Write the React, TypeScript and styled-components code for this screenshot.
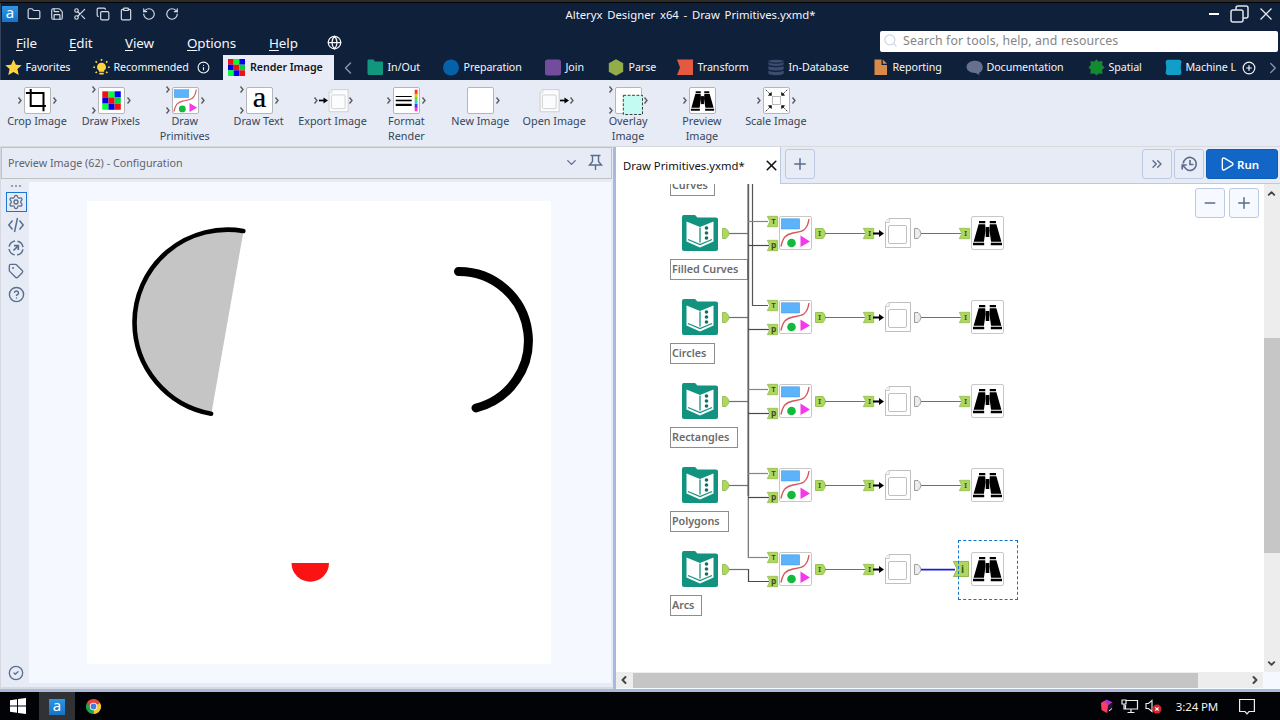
import React from "react";
import styled, { createGlobalStyle } from "styled-components";
import {
  Folder, Save, Scissors, Copy, Clipboard, RotateCcw, RotateCw, Globe, Search, Info,
  ChevronLeft, ChevronRight, ChevronDown, ChevronUp, ChevronsRight, CirclePlus, Minus, Plus, X,
  Settings, Tag, CircleHelp, CircleCheck, Play,
} from "lucide-react";

const GlobalStyle = createGlobalStyle`
  * { box-sizing: border-box; }
  body { margin: 0; overflow: hidden; font-family: "Noto Sans", "Open Sans", sans-serif; }
  svg { display: block; flex: none; overflow: visible; }
`;

const Window = styled.div`
  width: 1280px;
  height: 720px;
  display: flex;
  flex-direction: column;
  background: #e7ebf6;
`;

const TopEdge = styled.div`
  height: 3px;
  flex: none;
  background: #2c2c2c;
  border-bottom: 1px solid #050505;
`;

const Header = styled.header`
  flex: none;
  height: 77px;
  background: #0f203a;
  color: #f4f6fa;
  border-left: 1px solid #33435c;
  overflow: hidden;
`;

const TitleBar = styled.div`
  height: 22px;
  display: grid;
  grid-template-columns: 520px 1fr 420px;
  align-items: center;
`;

const QuickActions = styled.div`
  display: flex;
  align-items: center;
  gap: 9px;
  padding-left: 1px;
  color: #d8dde6;
`;

const AppLogo = styled.div`
  width: 16px;
  height: 16px;
  flex: none;
  background: linear-gradient(#2d97e8, #1672c4);
  color: #fff;
  font-size: 15px;
  line-height: 13px;
  text-align: center;
`;

const TitleText = styled.div`
  text-align: center;
  font-size: 11.3px;
  white-space: nowrap;
  word-spacing: 1.8px;
`;

const WindowButtons = styled.div`
  display: flex;
  align-items: center;
  justify-content: flex-end;
  padding-right: 8px;
  gap: 11px;
`;

const MenuRow = styled.div`
  height: 30px;
  display: flex;
  align-items: center;
  padding: 4px 2px 0 15px;
`;

const MenuItem = styled.div<{ $w: number }>`
  width: ${(p) => p.$w}px;
  height: 24px;
  font-size: 13.4px;
  letter-spacing: -0.1px;
  line-height: 24px;
  padding-top: 1px;
  &::first-letter { text-decoration: underline; text-underline-offset: 2px; }
`;

const SearchBox = styled.div`
  width: 398px;
  height: 21px;
  margin: 0 0 1px auto;
  display: flex;
  align-items: center;
  gap: 5px;
  padding: 0 0 2px 3px;
  border-radius: 2px;
  background: #fff;
  color: #858585;
  font-size: 12.3px;
  letter-spacing: 0.14px;
`;

const TabRow = styled.div`
  height: 25px;
  display: flex;
  align-items: center;
  padding-left: 4px;
  font-size: 10.7px;
  letter-spacing: -0.08px;
`;

const Category = styled.div<{ $w: number; $active?: boolean }>`
  width: ${(p) => p.$w}px;
  flex: none;
  height: 25px;
  display: flex;
  align-items: center;
  gap: 3.5px;
  white-space: nowrap;
  ${(p) => p.$active && "background: #e9ecf6; color: #10151f; font-weight: 600; padding-left: 5px; gap: 5px;"}
`;

const CategoryText = styled.span`
  line-height: 22px;
  height: 23px;
`;

const InfoSlot = styled.span`
  width: 27px;
  flex: none;
  padding-left: 1px;
`;

const ScrollTabs = styled.span<{ $w: number; $pad: number }>`
  width: ${(p) => p.$w}px;
  flex: none;
  padding-left: ${(p) => p.$pad}px;
  color: #8a96ad;
`;

const AddCategory = styled.span`
  width: 23px;
  flex: none;
  padding-left: 1px;
`;

const Ribbon = styled.div`
  height: 67px;
  flex: none;
  display: flex;
  border-bottom: 1px solid #d9dadd;
`;

const RibbonTool = styled.div`
  width: 73.9px;
  flex: none;
  display: flex;
  flex-direction: column;
  align-items: center;
  padding-top: 6px;
`;

const RibbonLabel = styled.div`
  font-size: 10.8px;
  line-height: 14.6px;
  text-align: center;
  white-space: pre;
  color: #33465a;
`;

const Main = styled.main`
  height: 542px;
  flex: none;
  display: flex;
`;

const ConfigPane = styled.section`
  width: 613px;
  flex: none;
  display: flex;
  flex-direction: column;
  border-left: 1px solid #d5d8e0;
`;

const ConfigHeader = styled.div`
  height: 32px;
  flex: none;
  margin-right: 1px;
  border: 1px solid #bfc0c2;
  display: flex;
  align-items: center;
  gap: 9px;
  padding: 0 8px 1px 6px;
  font-size: 10.75px;
  color: #5f636b;
  & > span { margin-right: auto; }
`;

const ConfigBody = styled.div`
  flex: 1;
  display: flex;
  padding: 3px 2px 4px 0;
  border-bottom: 2px solid #d9dadd;
`;

const SideBar = styled.div`
  width: 28px;
  display: flex;
  flex-direction: column;
  align-items: center;
  color: #5a6f8c;
  padding: 2px 0 0 2px;
`;

const Dots = styled.div`
  height: 5px;
  display: flex;
  gap: 2px;
  padding-top: 1px;
  & > i { width: 2px; height: 2px; background: #9a9ca3; }
`;

const SideButton = styled.div<{ $selected?: boolean; $last?: boolean }>`
  width: 21px;
  height: 20px;
  margin-top: ${(p) => (p.$last ? "auto" : "3px")};
  display: flex;
  align-items: center;
  justify-content: center;
  border: 1px solid ${(p) => (p.$selected ? "#1b76d2" : "transparent")};
`;

const PreviewArea = styled.div`
  flex: 1;
  background: #f5f8ff;
  padding: 19px 0 0 58px;
`;

const Splitter = styled.div`
  width: 3px;
  flex: none;
  background: #a9b9dc;
`;

const Workspace = styled.section`
  flex: 1;
  display: flex;
  flex-direction: column;
  background: #fff;
`;

const DocTabs = styled.div`
  height: 37px;
  flex: none;
  display: flex;
  align-items: center;
  background: #e7ebf6;
  border-bottom: 1px solid #bcc9e2;
`;

const DocTab = styled.div`
  width: 165px;
  height: 37px;
  margin-bottom: -1px;
  display: flex;
  align-items: center;
  justify-content: space-between;
  padding: 0 0 0 7px;
  margin-right: 4px;
  background: #fff;
  border-right: 1px solid #bcc9e2;
  font-size: 11.3px;
  color: #111;
`;

const SquareButton = styled.button<{ $light?: boolean }>`
  width: 30px;
  height: 30px;
  flex: none;
  padding: 0;
  display: flex;
  align-items: center;
  justify-content: center;
  border: 1px solid #bcc9e2;
  border-radius: 3px;
  color: #5a6c8c;
  background: ${(p) => (p.$light ? "#f6f9ff" : "#e8ecf7")};
`;

const TabActions = styled.div`
  margin-left: auto;
  margin-top: -2px;
  display: flex;
  gap: 2px;
  padding-right: 2px;
`;

const NewTab = styled.div`
  margin-top: -2px;
`;

const RunButton = styled.button`
  width: 72px;
  height: 30px;
  padding: 0 0 0 12px;
  display: flex;
  align-items: center;
  gap: 2px;
  border: 1px solid #0d5cb5;
  border-radius: 3px;
  background: #1166c8;
  color: #fff;
  font: 600 11.5px "Noto Sans", sans-serif;
`;

const CanvasRow = styled.div`
  height: 488px;
  display: flex;
`;

const Canvas = styled.div`
  position: relative;
  width: 648px;
  overflow: hidden;
  background: #fff;
`;

const Wires = styled.svg`
  position: absolute;
  left: 0;
  top: 0;
`;

const Node = styled.div<{ $x: number; $y: number }>`
  position: absolute;
  left: ${(p) => p.$x}px;
  top: ${(p) => p.$y}px;
`;

const Annotation = styled(Node)<{ $w: number }>`
  width: ${(p) => p.$w}px;
  height: 21px;
  border: 1px solid #8d8d8d;
  background: #fff;
  padding-left: 1px;
  font-size: 10.8px;
  font-weight: 600;
  line-height: 18px;
  letter-spacing: -0.05px;
  white-space: nowrap;
  color: #6b6b6b;
`;

const Selection = styled(Node)`
  width: 60px;
  height: 60px;
  border: 1px dashed #1272cf;
`;

const ZoomControls = styled.div`
  position: absolute;
  right: 5px;
  top: 4px;
  display: flex;
  gap: 4px;
`;

const VScroll = styled.div`
  width: 16px;
  background: #ededed;
  display: flex;
  flex-direction: column;
  align-items: center;
  padding: 4px 2px 3px 0;
  color: #444;
`;

const VThumb = styled.div`
  width: 16px;
  height: 215px;
  margin: 139px -2px auto 0;
  background: #c6c6c6;
`;

const HScroll = styled.div`
  height: 17px;
  display: flex;
  background: #f5f8ff;
`;

const HTrack = styled.div`
  width: 647px;
  height: 16px;
  background: #ededed;
  display: flex;
  align-items: center;
  justify-content: space-between;
  padding: 0 2px 0 2px;
  color: #444;
`;

const HThumb = styled.div`
  width: 565px;
  height: 15px;
  margin-right: auto;
  margin-left: 3px;
  background: #c5c5c5;
`;

const BottomEdge = styled.div`
  height: 3px;
  flex: none;
  background: #a9b9dc;
`;

const Taskbar = styled.footer`
  height: 28px;
  flex: none;
  display: flex;
  align-items: center;
  background: #020307;
  color: #f2f2f2;
`;

const TaskItem = styled.div<{ $active?: boolean }>`
  width: 36px;
  height: 28px;
  display: flex;
  align-items: center;
  justify-content: center;
  background: ${(p) => (p.$active ? "#303236" : "transparent")};
  &:first-child { margin-right: 3px; }
  & > ${AppLogo} { margin-top: 2px; }
`;

const Tray = styled.div`
  margin-left: auto;
  display: flex;
  align-items: center;
  gap: 7px;
  padding-right: 25px;
`;

const Clock = styled.span`
  font-size: 11.5px;
  letter-spacing: -0.15px;
  margin: 0 14px 0 7px;
`;

const GRID = ["#f01010", "#0f3", "#0000f0", "#0000e8", "#f01010", "#00d040", "#0f3", "#0000f0", "#f01010"];

const PixelCells = ({ cell }: { cell: number }) => (
  <g>
    {GRID.map((c, i) => (
      <rect key={i} x={(i % 3) * cell} y={Math.floor(i / 3) * cell} width={cell} height={cell} fill={c} />
    ))}
  </g>
);

const shapes: Record<string, React.ReactNode> = {
  star: <path d="M8.5 .5l2.4 5.2 5.8.6-4.3 3.8 1.3 5.9-5.2-3-5.2 3 1.3-5.9L.3 6.3l5.8-.6z" fill="#ffd53b" />,
  bulb: (
    <g stroke="#ffd53b" strokeWidth="1.6">
      <path d="M5.800 12.800v-1.500C4.500 10.500 4 9.500 4 8.200a4.500 4.500 0 0 1 9 0c0 1.300-.5 2.300-1.800 3.100v1.500z" fill="#ffd53b" stroke="none" />
      <path d="M6.300 14.600h4.400M8.500 0v1.800M2.600 2.300l1.300 1.300M14.400 2.300l-1.300 1.300M.300 8.200h1.700M15 8.200h1.700M2.600 14l1.300-1.300M14.400 14l-1.300-1.300" />
    </g>
  ),
  inout: <path d="M1.500.6h5l1.500 1.800h7q1 0 1 1v11q0 1.500-1.500 1.500h-12Q.500 15.900.500 14.400V1.600q0-1 1-1z" fill="#12977f" />,
  prep: <circle cx="8" cy="8.500" r="8" fill="#0761a8" />,
  join: <rect x="0" y=".5" width="16" height="16" rx="2.500" fill="#744c9c" />,
  parse: <path d="M8 .3l7.200 4v8.500L8 16.700.800 12.800V4.300z" fill="#93ad4b" />,
  transform: <path d="M0 .6h16v15.500H0l3-7.700z" fill="#e45a40" />,
  database: (
    <g fill="#3d4d70" stroke="#0f203a" strokeWidth=".9">
      <path d="M0 10.800v3.600c0 3 16 3 16 0v-3.600c-2 2-14 2-16 0zM0 6.300v3.600c0 3 16 3 16 0V6.300c-2 2-14 2-16 0z" />
      <path d="M0 2v3.200c0 3 16 3 16 0V2c-2 2.500-14 2.500-16 0z" />
      <ellipse cx="8" cy="2.200" rx="8" ry="1.900" />
    </g>
  ),
  report: <path d="M2.500 .5h7v5.500h5.500V16H2.500zM10.800.5l4.200 4.300h-4.200z" fill="#d98a48" />,
  docs: <path d="M8.500 1.800c9-1 11 9.500 4.500 12.200L13.500 16l-4-2C-2.500 13.800-2 2.500 8.500 1.800z" fill="#66708f" />,
  spatial: <path d="M8.500 .2l2 2.300 4-.4-.4 3.800 2.600 2.500-2.600 2.300.400 4-3.800-.3-2.200 2.200-2.300-2.200-3.900.300.400-3.900L.500 8.400l2.300-2.300-.4-3.900 3.900.300z" fill="#138a31" />,
  ml: <path d="M2.300 .8h12.500l1.700 1.500-.8 6.300.8 6-1.700 1.400H2.300L.600 14.500l.7-6-.7-6.200z" fill="#119fc9" />,
};

function Shape({ name }: { name: string }) {
  return <svg width="17" height="17" viewBox="0 0 17 17">{shapes[name]}</svg>;
}

const categories = [
  { icon: "inout", name: "In/Out", w: 76 },
  { icon: "prep", name: "Preparation", w: 102 },
  { icon: "join", name: "Join", w: 63 },
  { icon: "parse", name: "Parse", w: 69 },
  { icon: "transform", name: "Transform", w: 91 },
  { icon: "database", name: "In-Database", w: 104 },
  { icon: "report", name: "Reporting", w: 94 },
  { icon: "docs", name: "Documentation", w: 122 },
  { icon: "spatial", name: "Spatial", w: 77 },
  { icon: "ml", name: "Machine L", w: 76 },
];

const Binoculars = () => (
  <g fill="#000">
    <path d="M8 4.900h6.300v2.300H8zM18.700 4.900H25v2.300h-6.300z" />
    <path d="M7.600 8.200h6.600l.4 6-1.700 11.500H2.600zM25.400 8.200h-6.600l-.4 6 1.700 11.500h10.300z" />
    <path d="M14.700 11h3.600v10h-3.600z" />
    <path d="M2 26.700h11.200v2.500H2zM19.800 26.700H31v2.500H19.800z" />
  </g>
);

const Primitives = () => (
  <g>
    <rect x="2.300" y="2.800" width="18.400" height="10.200" fill="#5cb3fb" stroke="#4894d8" strokeWidth=".5" />
    <path d="M2 30.500C4 21 7 18.500 14 17s14-.5 16-14" fill="none" stroke="#d45a5e" strokeWidth="1.400" />
    <circle cx="12.500" cy="27" r="4.300" fill="#12b93a" />
    <path d="M21.500 19.500v11.500l9.500-5.500z" fill="#f637ea" />
  </g>
);

const Page = () => (
  <g fill="#fff" stroke="#c0c0c0">
    <path d="M4.800 1.500H26.500v29H1.500V5z" />
    <path d="M1.500 5.500h3.700V1.700" strokeWidth=".8" />
    <rect x="4.500" y="8.500" width="18" height="18" rx="1.500" />
  </g>
);

const toolArt: Record<string, React.ReactNode> = {
  crop: <path d="M8 2v21.500h19M2 7h22v23" fill="none" stroke="#000" strokeWidth="2.500" />,
  pixels: <g transform="translate(5 5)"><PixelCells cell={7.700} /></g>,
  primitives: <Primitives />,
  text: <text x="16.500" y="25" fontFamily="Liberation Serif, serif" fontSize="38" textAnchor="middle" stroke="#000" strokeWidth=".3">a</text>,
  format: (
    <g>
      <path d="M3 11.500h20" stroke="#000" strokeWidth="1.300" />
      <path d="M3 16.500h20" stroke="#000" strokeWidth="2" />
      <path d="M3 22h20" stroke="#000" strokeWidth="2.800" />
      <path d="M28.500 3v6" stroke="#f33" strokeWidth="3.500" /><path d="M28.500 8v5" stroke="#fb0" strokeWidth="3.500" />
      <path d="M28.500 12v6" stroke="#4e4" strokeWidth="3.500" /><path d="M28.500 17v5" stroke="#3cf" strokeWidth="3.500" />
      <path d="M28.500 21v5" stroke="#43f" strokeWidth="3.500" /><path d="M28.500 25v5" stroke="#f3c" strokeWidth="3.500" />
    </g>
  ),
  blank: null,
  overlay: <rect x="10" y="10" width="24" height="24" fill="#c3fbf3" stroke="#333" strokeWidth="1.200" strokeDasharray="3.500 2" />,
  preview: <Binoculars />,
  scale: (
    <g stroke="#111" fill="none" strokeWidth="1">
      <rect x="11.500" y="11.500" width="10" height="10" stroke="#aaa" />
      <path d="M3 3l7 7M30 3l-7 7M3 30l7-7M30 30l-7-7" strokeDasharray="3 1.500" />
      <path d="M10 6.500V10H6.500zM23 6.500V10h3.500zM10 26.500V23H6.500zM23 26.500V23h3.500z" fill="#111" />
    </g>
  ),
};

const tools = [
  { art: "crop", label: "Crop Image", ins: 1, out: true },
  { art: "pixels", label: "Draw Pixels", ins: 2, out: true },
  { art: "primitives", label: "Draw\nPrimitives", ins: 2, out: true },
  { art: "text", label: "Draw Text", ins: 2, out: true },
  { art: "export", label: "Export Image", ins: 1, out: true },
  { art: "format", label: "Format\nRender", ins: 1, out: true },
  { art: "blank", label: "New Image", ins: 0, out: true },
  { art: "open", label: "Open Image", ins: 0, out: true },
  { art: "overlay", label: "Overlay\nImage", ins: 2, out: true },
  { art: "preview", label: "Preview\nImage", ins: 1, out: false },
  { art: "scale", label: "Scale Image", ins: 1, out: true },
];

function RibbonIcon({ art, ins, out }: { art: string; ins: number; out: boolean }) {
  const exporting = art === "export";
  return (
    <svg width="74" height="28" viewBox="0 0 74 28">
      <g fill="none" stroke="#5c5c5c" strokeWidth="1.400">
        {ins === 1 && <path d="M18.500 11.500l2.500 3-2.500 3" />}
        {ins === 2 && <path d="M18.500.500l2.500 3-2.500 3M18.500 21.500l2.500 3-2.500 3" />}
        {out && <path d="M53.500 11.500l2.500 3-2.500 3" />}
      </g>
      {exporting || art === "open" ? (
        <g>
          <g transform={`translate(${exporting ? 32 : 22} 2.500) scale(.76)`} opacity=".85"><Page /></g>
          <path d={exporting ? "M23 14.500h5" : "M43 14.500h5"} stroke="#000" strokeWidth="1.700" />
          <path d={exporting ? "M27.500 11.500l4.500 3-4.500 3z" : "M47.500 11.500l4.500 3-4.500 3z"} />
        </g>
      ) : (
        <g>
          <rect x="24.500" y="1.500" width="26" height="26" rx="1.500" fill="#fff" stroke="#b5b6ba" />
          <g transform="translate(24.300 1.300) scale(.8)">{toolArt[art]}</g>
        </g>
      )}
    </svg>
  );
}

const Framed = ({ children }: { children: React.ReactNode }) => (
  <svg width="33" height="34" viewBox="0 0 33 34">
    <rect x=".5" y=".5" width="32" height="33" rx="1.500" fill="#fff" stroke="#c8c8c8" />
    {children}
  </svg>
);

const InputTool = () => (
  <svg width="36" height="36" viewBox="0 0 36 36">
    <path d="M2 0h11l2.500 2.500H34q2 0 2 2V34q0 2-2 2H2q-2 0-2-2V2Q0 0 2 0z" fill="#12937f" />
    <path d="M4.500 6.500L18 12l13.500-5.500v20L18 32.500 4.500 26.500z" fill="#fff" />
    <path d="M18 12.500v15M6 24.500l12 5 12-5" stroke="#12937f" strokeWidth="1.300" fill="none" />
    <g fill="#12705f"><circle cx="24.500" cy="13" r="1.800" /><circle cx="24.500" cy="18" r="1.800" /><circle cx="24.500" cy="23" r="1.800" /></g>
  </svg>
);

const PortIn = ({ letter, big }: { letter: string; big?: boolean }) => (
  <svg width={big ? 16 : 11} height={big ? 16 : 11} viewBox="0 0 11 11">
    <path d="M.3.300h10.400v10.400H.3L2.800 5.500z" fill="#aed75f" stroke="#87ad3c" strokeWidth=".6" />
    <text x="6.600" y={letter === "p" ? 7.800 : 8} textAnchor="middle" fontSize={letter === "p" ? 8.500 : 7} fontWeight="700" fill="#38552a">{letter}</text>
  </svg>
);

const PortOut = ({ letter, pale }: { letter?: string; pale?: boolean }) => (
  <svg width={letter ? 11 : 8} height="11" viewBox={`0 0 ${letter ? 11 : 8} 11`}>
    <path
      d={letter ? "M.5.500h7.500q2 2 2.500 5-.5 3-2.500 5H.5z" : "M.5.500h3.500q2.500 2 3 5-.5 3-3 5H.5z"}
      fill={pale ? "#ececec" : "#aed75f"} stroke={pale ? "#888" : "#8db545"} strokeWidth=".8"
    />
    {letter && <text x="4.500" y="8" textAnchor="middle" fontSize="7" fontWeight="700" fill="#38552a">{letter}</text>}
  </svg>
);

const flows = [
  { name: "Filled Curves", y: 49, w: 78 },
  { name: "Circles", y: 133, w: 45 },
  { name: "Rectangles", y: 217, w: 68 },
  { name: "Polygons", y: 301, w: 59 },
  { name: "Arcs", y: 385, w: 32, selected: true },
];

function Flow({ name, y, w, selected }: { name: string; y: number; w: number; selected?: boolean }) {
  return (
    <>
      <Node $x={65.5} $y={y - 18}><InputTool /></Node>
      <Node $x={105.5} $y={y - 5}><PortOut /></Node>
      <Annotation $x={54} $y={y + 26} $w={w}>{name}</Annotation>
      <Node $x={150.5} $y={y - 17}><PortIn letter="T" /></Node>
      <Node $x={150.5} $y={y + 6.5}><PortIn letter="p" /></Node>
      <Node $x={163} $y={y - 17}><Framed><Primitives /></Framed></Node>
      <Node $x={198.500} $y={y - 5}><PortOut letter="I" /></Node>
      <Node $x={246.500} $y={y - 5}><PortIn letter="I" /></Node>
      <Node $x={257} $y={y - 5}>
        <svg width="12" height="11" viewBox="0 0 12 11"><path d="M0 4.600h6V2l5 3.500-5 3.500V6.400H0z" /></svg>
      </Node>
      <Node $x={268} $y={y - 16}><svg width="28" height="33" viewBox="0 0 28 33"><Page /></svg></Node>
      <Node $x={297.500} $y={y - 5}><PortOut pale /></Node>
      {selected
        ? <Node $x={336.500} $y={y - 8}><PortIn letter="i" big /></Node>
        : <Node $x={342.500} $y={y - 5}><PortIn letter="I" /></Node>}
      <Node $x={355} $y={y - 17}><Framed><Binoculars /></Framed></Node>
    </>
  );
}

export default function App() {
  return (
    <Window>
      <GlobalStyle />
      <TopEdge />
      <Header>
        <TitleBar>
          <QuickActions>
            <AppLogo>a</AppLogo>
            <Folder size={14} /><Save size={14} /><Scissors size={14} />
            <Copy size={14} /><Clipboard size={14} /><RotateCcw size={14} />
            <RotateCw size={14} />
          </QuickActions>
          <TitleText>Alteryx Designer x64 - Draw Primitives.yxmd*</TitleText>
          <WindowButtons>
            <svg width="10" height="10"><path d="M0 5h10" stroke="#fff" strokeWidth="2" /></svg>
            <svg width="19" height="18" viewBox="0 0 19 18" fill="none" stroke="#dfe4ec" strokeWidth="1.500">
              <rect x="1" y="5" width="12" height="12" rx="2" /><path d="M6 5V3q0-2 2-2h8q2 0 2 2v8q0 2-2 2h-3" />
            </svg>
            <svg width="12" height="12"><path d="M.5.500l11 11M11.500.500l-11 11" stroke="#e6e9ef" strokeWidth="1.300" /></svg>
          </WindowButtons>
        </TitleBar>
        <MenuRow>
          <MenuItem $w={53}>File</MenuItem>
          <MenuItem $w={56}>Edit</MenuItem>
          <MenuItem $w={62}>View</MenuItem>
          <MenuItem $w={82}>Options</MenuItem>
          <MenuItem $w={58}>Help</MenuItem>
          <Globe size={15} />
          <SearchBox><Search size={15} color="#cdd5ea" />Search for tools, help, and resources</SearchBox>
        </MenuRow>
        <TabRow>
          <Category $w={88}><Shape name="star" /><CategoryText>Favorites</CategoryText></Category>
          <Category $w={103}><Shape name="bulb" /><CategoryText>Recommended</CategoryText></Category>
          <InfoSlot><Info size={13} /></InfoSlot>
          <Category $w={111} $active>
            <svg width="17" height="17" viewBox="0 0 18 18"><PixelCells cell={6} /></svg>
            <CategoryText>Render Image</CategoryText>
          </Category>
          <ScrollTabs $w={33} $pad={4}><ChevronLeft size={20} strokeWidth={1.700} /></ScrollTabs>
          {categories.map((c) => (
            <Category key={c.name} $w={c.w}><Shape name={c.icon} /><CategoryText>{c.name}</CategoryText></Category>
          ))}
          <AddCategory><CirclePlus size={14} /></AddCategory>
          <ScrollTabs $w={18} $pad={0}><ChevronRight size={18} strokeWidth={1.700} /></ScrollTabs>
        </TabRow>
      </Header>

      <Ribbon>
        {tools.map((t) => (
          <RibbonTool key={t.label}>
            <RibbonIcon art={t.art} ins={t.ins} out={t.out} />
            <RibbonLabel>{t.label}</RibbonLabel>
          </RibbonTool>
        ))}
      </Ribbon>

      <Main>
        <ConfigPane>
          <ConfigHeader>
            <span>Preview Image (62) - Configuration</span>
            <ChevronDown size={15} color="#5a6c8c" />
            <svg width="15" height="17" viewBox="0 0 15 17" fill="none" stroke="#5a6c8c" strokeWidth="1.400">
              <path d="M2.500 1.500h10M4.500 1.500v6L1.500 11h12l-3-3.500v-6M7.500 11v5" />
            </svg>
          </ConfigHeader>
          <ConfigBody>
            <SideBar>
              <Dots><i /><i /><i /></Dots>
              <SideButton $selected><Settings size={16} /></SideButton>
              <SideButton>
                <svg width="16" height="14" viewBox="0 0 16 14" fill="none" stroke="currentColor" strokeWidth="1.500"><path d="M4.500 2.500L.800 7l3.700 4.500M11.500 2.500L15.200 7l-3.700 4.500M9.500 0l-3 14" /></svg>
              </SideButton>
              <SideButton>
                <svg width="16" height="16" viewBox="0 0 16 16" fill="none" stroke="currentColor" strokeWidth="1.500">
                  <circle cx="8" cy="8" r="7" strokeDasharray="8.500 2.500" strokeDashoffset="9.700" /><path d="M5.500 10.500l5-5M6 5.700h4.300V10" strokeWidth="1.700" />
                </svg>
              </SideButton>
              <SideButton><Tag size={16} /></SideButton>
              <SideButton><CircleHelp size={17} /></SideButton>
              <SideButton $last><CircleCheck size={16} /></SideButton>
            </SideBar>
            <PreviewArea>
              <svg width="464" height="463" viewBox="87 201 464 463">
                <rect x="87" y="201" width="464" height="463" fill="#fff" />
                <path d="M243.500 231A93 93 0 0 0 134.500 322.500A93 93 0 0 0 211.300 414z" fill="#c5c5c5" />
                <path d="M243.300 231A93 93 0 0 0 134.500 322.500A93 93 0 0 0 211.100 413.700" fill="none" stroke="#000" strokeWidth="4.600" strokeLinecap="round" />
                <path d="M458.500 271.500A69.300 69.300 0 0 1 476 408" fill="none" stroke="#000" strokeWidth="9" strokeLinecap="round" />
                <path d="M291.500 563h37.500a18.700 18.700 0 0 1-37.500 0z" fill="#fb1212" />
              </svg>
            </PreviewArea>
          </ConfigBody>
        </ConfigPane>
        <Splitter />
        <Workspace>
          <DocTabs>
            <DocTab>Draw Primitives.yxmd*<X size={17} strokeWidth={2.300} /></DocTab>
            <NewTab><SquareButton><Plus size={18} /></SquareButton></NewTab>
            <TabActions>
              <SquareButton><ChevronsRight size={16} /></SquareButton>
              <SquareButton>
                <svg width="17" height="16" viewBox="0 0 17 16" fill="none" stroke="currentColor" strokeWidth="1.600">
                  <path d="M2.300 7.500A6.500 6.500 0 1 1 6 13.800M9 4v4.500h3.500M1.200 13.500V9h4.500M1.500 9.300l4.500 4.500" />
                </svg>
              </SquareButton>
              <RunButton><Play size={16} />Run</RunButton>
            </TabActions>
          </DocTabs>
          <CanvasRow>
            <Canvas>
              <Annotation $x={54} $y={-9} $w={45}>Curves</Annotation>
              {flows.map((f) => <Flow key={f.name} {...f} />)}
              <Wires width="648" height="488" fill="none" stroke="#6f6f6f" strokeWidth="1.200">
                <path d="M132.300 0V312" stroke="#616161" strokeWidth="1.800" />
                <path d="M132.300 312V373.500H152" />
                <path d="M136.500 0V121.500H152" stroke="#555" />
                {flows.map((f) => (
                  <g key={f.name}>
                    <path d={`M113 ${f.y + .5}H132`} />
                    {f.name !== "Circles" && <path d={`M132 ${f.y - 11.500}H152`} stroke="#858585" />}
                    <path d={f.selected ? `M132.500 ${f.y}V${f.y + 12.500}H153` : `M132 ${f.y + 12.500}H153`} stroke="#484848" />
                    <path d={`M209 ${f.y + .5}H249`} />
                    {f.selected
                      ? <path d={`M305 ${f.y + .7}H339`} stroke="#1c1ce0" strokeWidth="1.800" />
                      : <path d={`M305 ${f.y + .5}H345`} />}
                  </g>
                ))}
              </Wires>
              <Selection $x={342} $y={356} />
              <ZoomControls>
                <SquareButton $light><Minus size={16} strokeWidth={2.500} /></SquareButton>
                <SquareButton $light><Plus size={18} /></SquareButton>
              </ZoomControls>
            </Canvas>
            <VScroll>
              <ChevronUp size={11} strokeWidth={4} />
              <VThumb />
              <ChevronDown size={11} strokeWidth={4} />
            </VScroll>
          </CanvasRow>
          <HScroll>
            <HTrack>
              <ChevronLeft size={12} strokeWidth={4} />
              <HThumb />
              <ChevronRight size={12} strokeWidth={4} />
            </HTrack>
          </HScroll>
        </Workspace>
      </Main>
      <BottomEdge />

      <Taskbar>
        <TaskItem>
          <svg width="16" height="16" viewBox="0 0 16 16" fill="#fff"><path d="M0 2.200l7-.9v6.200H0zM8 1.100L16 0v7.500H8zM0 8.500h7v6.200l-7-.9zM8 8.500h8V16l-8-1.100z" /></svg>
        </TaskItem>
        <TaskItem $active><AppLogo>a</AppLogo></TaskItem>
        <TaskItem>
          <svg width="15" height="15" viewBox="0 0 15 15">
            <path d="M7.500 7.500L1 3.700A7.500 7.500 0 0 1 14 3.700z" fill="#e8443a" />
            <path d="M7.500 7.500V15A7.500 7.500 0 0 1 1 3.700z" fill="#25a04b" />
            <path d="M7.500 7.500L14 3.700A7.500 7.500 0 0 1 7.500 15z" fill="#fbc62d" />
            <path d="M1.200 3.600H14L7.500 4.500 4.200 8.600z" fill="#e8443a" />
            <circle cx="7.500" cy="7.500" r="3.700" fill="#fff" /><circle cx="7.500" cy="7.500" r="2.900" fill="#3e7de8" />
          </svg>
        </TaskItem>
        <Tray>
          <svg width="14" height="15" viewBox="0 0 14 15">
            <path d="M7 7.300l5.500-3.800v7L7 14z" fill="#24172b" />
            <path d="M6.500.500l6 2.800-5.500 4L1 4z" fill="#b02fd0" />
            <path d="M1 4l3.500-2L8 6.500 7 14l-5.500-3z" fill="#fb3f62" />
            <path d="M9 12l3-2.500" stroke="#eee" />
          </svg>
          <svg width="17" height="15" viewBox="0 0 17 15" fill="none" stroke="#eee" strokeWidth="1.200">
            <path d="M5.500 1.500h11v8.500h-12V6M10 10v3M6.500 13.500h7M1 1h4v4H1zM3 5v5h1.500" />
          </svg>
          <svg width="17" height="16" viewBox="0 0 17 16">
            <path d="M1 5.500h2.500l3.500-3v11l-3.500-3H1z" fill="none" stroke="#eee" strokeWidth="1.100" />
            <circle cx="12" cy="11" r="4.500" fill="#d8232d" /><path d="M10.300 9.300l3.400 3.400M13.700 9.300l-3.400 3.400" stroke="#fff" strokeWidth="1.200" />
          </svg>
          <Clock>3:24 PM</Clock>
          <svg width="16" height="17" viewBox="0 0 16 17" fill="none" stroke="#eee" strokeWidth="1.200"><path d="M.600 1.500h14.800v12H10L8 15.800 6 13.500H.600z" /></svg>
        </Tray>
      </Taskbar>
    </Window>
  );
}
